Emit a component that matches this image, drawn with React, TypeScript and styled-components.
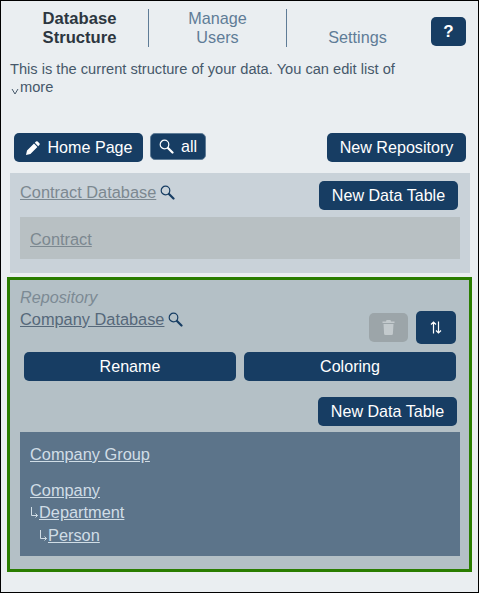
import React from "react";
import styled, { createGlobalStyle } from "styled-components";

const GlobalStyle = createGlobalStyle`
  html, body {
    margin: 0;
    padding: 0;
    background: #eaeef1;
  }
  * {
    box-sizing: border-box;
  }
`;

const Page = styled.div`
  width: 479px;
  height: 593px;
  border: 1px solid #000;
  background: #eaeef1;
  font-family: "Liberation Sans", Arial, sans-serif;
  font-size: 16px;
  color: #34495e;
  overflow: hidden;
`;

const Header = styled.div`
  display: flex;
  align-items: flex-start;
  padding: 8px 12px 0 0;
`;

const Tab = styled.div<{ $active?: boolean; $width: number; $divider?: boolean; $inset?: number }>`
  width: ${(p) => p.$width}px;
  height: 38px;
  padding-left: ${(p) => p.$inset ?? 0}px;
  display: flex;
  align-items: flex-end;
  justify-content: center;
  text-align: center;
  line-height: 19px;
  font-size: ${(p) => (p.$active ? 16.6 : 16.2)}px;
  font-weight: ${(p) => (p.$active ? 700 : 400)};
  color: ${(p) => (p.$active ? "#2c3640" : "#5f7c97")};
  border-right: ${(p) => (p.$divider ? "1px solid #5f7c97" : "none")};
`;

const Button = styled.button<{ $width?: number; $height?: number }>`
  display: inline-flex;
  align-items: center;
  justify-content: center;
  gap: 7px;
  width: ${(p) => (p.$width ? `${p.$width}px` : "auto")};
  height: ${(p) => p.$height ?? 29}px;
  padding: 0;
  border: none;
  border-radius: 5px;
  background: #173d63;
  color: #fff;
  font-family: inherit;
  font-size: 16.1px;
  line-height: 1;
`;

const HelpButton = styled(Button)`
  margin: 8px 0 0 auto;
  font-size: 17px;
  font-weight: 700;
`;

const SearchAllButton = styled(Button)`
  border: 1px solid #5f7c97;
`;

const Intro = styled.div`
  padding: 0 9px;
  margin-top: 14px;
  font-size: 14.65px;
  line-height: 17px;
  color: #46586a;
`;

const MoreRow = styled.div`
  display: flex;
  align-items: center;
  gap: 1px;
  margin-top: 1px;
`;

const Toolbar = styled.div`
  display: flex;
  align-items: flex-start;
  gap: 7px;
  padding: 0 12px 0 13px;
  margin-top: 37px;
`;

const PushRight = styled.div`
  margin-left: auto;
`;

const Repo = styled.section`
  margin: 11px 8px 0 9px;
  height: 100px;
  padding: 8px 10px 0;
  background: #c9d2d9;
`;

const RepoHead = styled.div`
  display: flex;
  justify-content: space-between;
  align-items: flex-start;
  padding-right: 2px;
  height: 36px;
`;

const NameRow = styled.div`
  display: flex;
  align-items: flex-start;
  gap: 4px;
  height: 20px;
  line-height: 20px;
  font-size: 16.35px;
`;

const LinkIcon = styled.span`
  display: block;
  height: 15px;
  margin-top: 2px;
`;

const DbLink = styled.a<{ $muted?: boolean }>`
  color: ${(p) => (p.$muted ? "#7c8890" : "#56687a")};
  text-decoration: underline;
`;

const ContractHead = styled.div`
  padding-top: 1px;
`;

const CompanyHead = styled.div`
  padding-top: 3px;
`;

const TableList = styled.div<{ $dark?: boolean }>`
  background: ${(p) => (p.$dark ? "#5c748a" : "#b8c0c3")};
  padding: ${(p) => (p.$dark ? "11px 10px 0" : "13px 10px 0")};
  height: ${(p) => (p.$dark ? 124 : 42)}px;
`;

const TableLink = styled.a<{ $light?: boolean }>`
  color: ${(p) => (p.$light ? "#d0dde6" : "#7c8890")};
  font-size: 16.35px;
  text-decoration: underline;
  line-height: 19px;
`;

const SelectedRepo = styled.section`
  margin: 4px 6px 0 6px;
  height: 295px;
  border: 3px solid #2a7d00;
  padding: 8px 9px 0 10px;
  background: #b4c0c6;
`;

const RepoLabel = styled.div`
  font-style: italic;
  font-size: 16.2px;
  color: #7c8a94;
  line-height: 18px;
`;

const RepoTop = styled.div`
  display: flex;
  justify-content: space-between;
  align-items: flex-start;
  height: 46px;
`;

const IconButtons = styled.div`
  display: flex;
  align-items: center;
  gap: 8px;
  margin-top: 5px;
  padding-right: 4px;
`;

const DisabledButton = styled(Button)`
  background: #9ca5a9;
`;

const WideRow = styled.div`
  display: grid;
  grid-template-columns: 212px 212px;
  gap: 8px;
  padding-left: 4px;
`;

const NewTableRow = styled.div`
  display: flex;
  justify-content: flex-end;
  padding-right: 3px;
  margin: 16px 0 6px;
`;

const TableRow = styled.div<{ $indent?: number; $height?: number }>`
  display: flex;
  align-items: center;
  height: ${(p) => p.$height ?? 23}px;
  padding-left: ${(p) => p.$indent ?? 0}px;
  color: #d0dde6;
`;

const Spacer = styled.div`
  height: 13px;
`;

const ArrowGlyph: React.FC = () => (
  <svg width="9" height="13" viewBox="0 0 9 13" fill="none" stroke="#d0dde6" strokeWidth="1">
    <path d="M1.5 1v8.5H7.5M5.5 7.5l2 2-2 2" />
  </svg>
);

const Magnifier: React.FC<{ color?: string }> = ({ color = "#173d63" }) => (
  <svg width="15" height="15" viewBox="0 0 15 15" fill="none">
    <circle cx="5.5" cy="5.5" r="4.3" stroke={color} strokeWidth="1.2" />
    <path d="M9 9l4.5 4.5" stroke={color} strokeWidth="2.2" strokeLinecap="round" />
  </svg>
);

const Pencil: React.FC = () => (
  <svg width="16" height="16" viewBox="0 0 16 16" fill="#fff">
    <path d="M11 1.6a1.2 1.2 0 0 1 1.7 0l1.7 1.7a1.2 1.2 0 0 1 0 1.7l-1.2 1.2-3.4-3.4zM9 3.6 12.4 7l-7 7L1 15l1-4.4z" />
  </svg>
);

const Trash: React.FC = () => (
  <svg width="13" height="15" viewBox="0 0 13 15" fill="#c3cacd">
    <path d="M4.5 0h4l.5 1.5h3.5v1.6H.5V1.5H4zM1.5 4h10l-.6 9.5a1.4 1.4 0 0 1-1.4 1.5h-6a1.4 1.4 0 0 1-1.4-1.5z" />
  </svg>
);

const SortArrows: React.FC = () => (
  <svg width="12" height="13" viewBox="0 0 12 13" fill="none" stroke="#fff" strokeWidth="1.2">
    <path d="M3.5 12.5V1M1 3.5 3.5 1 6 3.5M8.5 0.5V12M6 9.5 8.5 12 11 9.5" />
  </svg>
);

const ChevronIcon = styled.svg`
  margin: 7px 0 0 1px;
`;

const Chevron: React.FC = () => (
  <ChevronIcon width="8" height="7" viewBox="0 0 8 7" fill="none" stroke="#46586a" strokeWidth="1">
    <path d="M1 1l3 5 3-5" />
  </ChevronIcon>
);

const App: React.FC = () => {
  return (
    <Page>
      <GlobalStyle />
      <Header>
        <Tab $active $width={148} $divider $inset={10}>
          Database
          <br />
          Structure
        </Tab>
        <Tab $width={138} $divider>
          Manage
          <br />
          Users
        </Tab>
        <Tab $width={141}>Settings</Tab>
        <HelpButton $width={35}>?</HelpButton>
      </Header>
      <Intro>
        This is the current structure of your data. You can edit list of
        <MoreRow>
          <Chevron />
          more
        </MoreRow>
      </Intro>
      <Toolbar>
        <Button $width={129}>
          <Pencil />
          Home Page
        </Button>
        <SearchAllButton $width={56} $height={27}>
          <Magnifier color="#fff" />
          all
        </SearchAllButton>
        <PushRight>
          <Button $width={139}>New Repository</Button>
        </PushRight>
      </Toolbar>
      <Repo>
        <RepoHead>
          <ContractHead>
            <NameRow>
              <DbLink $muted>Contract Database</DbLink>
              <LinkIcon>
                <Magnifier />
              </LinkIcon>
            </NameRow>
          </ContractHead>
          <Button $width={139}>New Data Table</Button>
        </RepoHead>
        <TableList>
          <TableLink>Contract</TableLink>
        </TableList>
      </Repo>
      <SelectedRepo>
        <RepoLabel>Repository</RepoLabel>
        <RepoTop>
          <CompanyHead>
            <NameRow>
              <DbLink>Company Database</DbLink>
              <LinkIcon>
                <Magnifier />
              </LinkIcon>
            </NameRow>
          </CompanyHead>
          <IconButtons>
            <DisabledButton $width={39}>
              <Trash />
            </DisabledButton>
            <Button $width={40} $height={33}>
              <SortArrows />
            </Button>
          </IconButtons>
        </RepoTop>
        <WideRow>
          <Button>Rename</Button>
          <Button>Coloring</Button>
        </WideRow>
        <NewTableRow>
          <Button $width={139}>New Data Table</Button>
        </NewTableRow>
        <TableList $dark>
          <TableRow>
            <TableLink $light>Company Group</TableLink>
          </TableRow>
          <Spacer />
          <TableRow $height={22}>
            <TableLink $light>Company</TableLink>
          </TableRow>
          <TableRow $height={22}>
            <ArrowGlyph />
            <TableLink $light>Department</TableLink>
          </TableRow>
          <TableRow $height={24} $indent={9}>
            <ArrowGlyph />
            <TableLink $light>Person</TableLink>
          </TableRow>
        </TableList>
      </SelectedRepo>
    </Page>
  );
};

export default App;
